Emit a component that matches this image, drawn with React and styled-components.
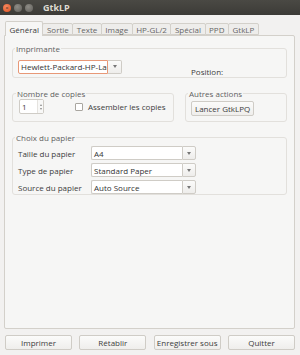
import React from "react";
import styled, { createGlobalStyle } from "styled-components";

const Global = createGlobalStyle`
  html, body { margin: 0; padding: 0; background: #f2f1f0; }
  body { font-family: "Open Sans", "Noto Sans", sans-serif; font-size: 8px; color: #3c3c3c; }
  * { box-sizing: border-box; }
`;

const Window = styled.div`
  width: 300px;
  height: 355px;
  display: flex;
  flex-direction: column;
  background: #f2f1f0;
  overflow: hidden;
`;

const TitleBar = styled.div`
  height: 15px;
  flex: none;
  display: flex;
  align-items: center;
  padding-left: 3px;
  background: linear-gradient(#4a4944, #3c3b37);
`;

const WinBtn = styled.span`
  width: 8px;
  height: 8px;
  border-radius: 50%;
  margin-right: 3px;
  background: ${(p) => (p.$close ? "radial-gradient(circle at 40% 35%, #f58b62, #e1501f)" : "radial-gradient(circle at 40% 35%, #8e8c86, #5f5e59)")};
  display: flex;
  align-items: center;
  justify-content: center;
  color: #3a2a22;
  font-size: 6px;
  line-height: 1;
`;

const Title = styled.span`
  margin-left: 7px;
  color: #dfdbd2;
  font-weight: 700;
  font-size: 9px;
`;

const Body = styled.div`
  flex: 1;
  display: flex;
  flex-direction: column;
  padding: 6px 5px 5px 4px;
`;

const Tabs = styled.div`
  display: flex;
  align-items: flex-end;
  height: 14px;
  padding-left: 1px;
  position: relative;
  z-index: 1;
`;

const Tab = styled.div`
  height: ${(p) => (p.$active ? 15 : 12)}px;
  margin-bottom: ${(p) => (p.$active ? -1 : 0)}px;
  padding: 0 3.5px;
  display: flex;
  align-items: center;
  border: 1px solid #d3d0ca;
  border-bottom: ${(p) => (p.$active ? "none" : "1px solid #d3d0ca")};
  border-radius: 2px 2px 0 0;
  margin-right: -1px;
  background: ${(p) => (p.$active ? "#f6f6f5" : "#eeedeb")};
  color: ${(p) => (p.$active ? "#3c3c3c" : "#666")};
  font-size: 8px;
`;

const Page = styled.div`
  flex: 1;
  background: #f6f6f5;
  border: 1px solid #d3d0ca;
  border-radius: 0 2px 2px 2px;
  padding: 8px 7px 0 7px;
  display: flex;
  flex-direction: column;
  gap: 11px;
`;

const Frame = styled.fieldset`
  margin: 0;
  border: 1px solid #e2e0dc;
  border-radius: 3px;
  padding: ${(p) => p.$pad || "3px 5px 5px 5px"};
  min-width: 0;
  flex: ${(p) => p.$flex || "none"};
  ${(p) => (p.$width ? `width: ${p.$width}px;` : "")}
  ${(p) => (p.$height ? `height: ${p.$height}px;` : "")}
`;

const Legend = styled.legend`
  padding: 0 1px;
  margin-left: -3px;
  color: #5f5f5f;
  font-size: 8px;
  line-height: 9px;
`;

const Row = styled.div`
  display: flex;
  align-items: center;
`;

const FrameRow = styled.div`
  display: flex;
  gap: 11px;
`;

const ComboWrap = styled.div`
  display: flex;
  height: 14px;
  width: ${(p) => p.$w}px;
`;

const ComboEntry = styled.div`
  flex: 1;
  min-width: 0;
  overflow: hidden;
  white-space: nowrap;
  background: #fff;
  border: 1px solid ${(p) => (p.$focus ? "#e89877" : "#cfccc6")};
  border-right: ${(p) => (p.$focus ? "1px solid #e89877" : "none")};
  border-radius: 2px 0 0 2px;
  padding-left: 2px;
  display: flex;
  align-items: center;
  color: #333;
  font-size: 8px;
`;

const ComboBtn = styled.div`
  width: 14px;
  border: 1px solid #cfccc6;
  border-left: ${(p) => (p.$focus ? "none" : "1px solid #cfccc6")};
  border-radius: 0 2px 2px 0;
  background: linear-gradient(#fbfbfa, #eeedeb);
  display: flex;
  align-items: center;
  justify-content: center;
`;

const Arrow = styled.span`
  width: 0;
  height: 0;
  border-left: 2.5px solid transparent;
  border-right: 2.5px solid transparent;
  border-top: 3px solid #777;
`;

const Combo = ({ w, value, focus }) => (
  <ComboWrap $w={w}>
    <ComboEntry $focus={focus}>{value}</ComboEntry>
    <ComboBtn $focus={focus}>
      <Arrow />
    </ComboBtn>
  </ComboWrap>
);

const Spin = styled.div`
  display: flex;
  height: 15px;
  width: 25px;
  border: 1px solid #cfccc6;
  border-radius: 2px;
  background: #fff;
`;

const SpinText = styled.div`
  flex: 1;
  padding-left: 2px;
  display: flex;
  align-items: center;
`;

const SpinBtns = styled.div`
  width: 6px;
  display: flex;
  flex-direction: column;
  align-items: center;
  justify-content: center;
  gap: 2px;
  border-left: 1px solid #e5e3df;
  background: #f8f8f7;
`;

const SpinArrow = styled.span`
  width: 0;
  height: 0;
  border-left: 1.5px solid transparent;
  border-right: 1.5px solid transparent;
  ${(p) => (p.$up ? "border-bottom: 2px solid #888;" : "border-top: 2px solid #888;")}
`;

const Check = styled.span`
  width: 8px;
  height: 8px;
  border: 1px solid #a9a6a0;
  border-radius: 1px;
  background: #fff;
  margin-left: 31px;
  margin-right: 5px;
`;

const Button = styled.div`
  height: 15px;
  display: flex;
  align-items: center;
  justify-content: center;
  padding: 0 3px;
  border: 1px solid #cfccc6;
  border-radius: 2px;
  background: linear-gradient(#fbfbfa, #efeeec);
  color: #3c3c3c;
  font-size: 8px;
  white-space: nowrap;
  ${(p) => (p.$w ? `width: ${p.$w}px;` : "")}
`;

const Label = styled.span`
  color: #3c3c3c;
`;

const PositionLabel = styled(Label)`
  margin-left: 69px;
  margin-top: 10px;
`;

const PaperGrid = styled.div`
  display: grid;
  grid-template-columns: 73px 105px;
  row-gap: 3px;
  align-items: center;
`;

const BottomBar = styled.div`
  display: flex;
  justify-content: space-between;
  padding-top: 6px;
  padding-left: 1px;
`;

export default function App() {
  const tabs = ["Général", "Sortie", "Texte", "Image", "HP-GL/2", "Spécial", "PPD", "GtkLP"];
  return (
    <>
      <Global />
      <Window>
        <TitleBar>
          <WinBtn $close>×</WinBtn>
          <WinBtn />
          <WinBtn />
          <Title>GtkLP</Title>
        </TitleBar>
        <Body>
          <Tabs>
            {tabs.map((t, i) => (
              <Tab key={t} $active={i === 0}>
                {t}
              </Tab>
            ))}
          </Tabs>
          <Page>
            <Frame $height={34} $pad="3px 5px 0 5px">
              <Legend>Imprimante</Legend>
              <Row>
                <Combo w={104} value="Hewlett-Packard-HP-LaserJet" focus />
                <PositionLabel>Position:</PositionLabel>
              </Row>
            </Frame>
            <FrameRow>
              <Frame $width={162} $height={33} $pad="1px 6px 0 6px">
                <Legend>Nombre de copies</Legend>
                <Row>
                  <Spin>
                    <SpinText>1</SpinText>
                    <SpinBtns>
                      <SpinArrow $up />
                      <SpinArrow />
                    </SpinBtns>
                  </Spin>
                  <Check />
                  <Label>Assembler les copies</Label>
                </Row>
              </Frame>
              <Frame $flex="1" $height={33} $pad="3px 5px 0 5px">
                <Legend>Autres actions</Legend>
                <Row>
                  <Button>Lancer GtkLPQ</Button>
                </Row>
              </Frame>
            </FrameRow>
            <Frame $height={62} $pad="4px 5px 0 5px">
              <Legend>Choix du papier</Legend>
              <PaperGrid>
                <Label>Taille du papier</Label>
                <Combo w={105} value="A4" />
                <Label>Type de papier</Label>
                <Combo w={105} value="Standard Paper" />
                <Label>Source du papier</Label>
                <Combo w={105} value="Auto Source" />
              </PaperGrid>
            </Frame>
          </Page>
          <BottomBar>
            <Button $w={67}>Imprimer</Button>
            <Button $w={67}>Rétablir</Button>
            <Button $w={67}>Enregistrer sous</Button>
            <Button $w={67}>Quitter</Button>
          </BottomBar>
        </Body>
      </Window>
    </>
  );
}
